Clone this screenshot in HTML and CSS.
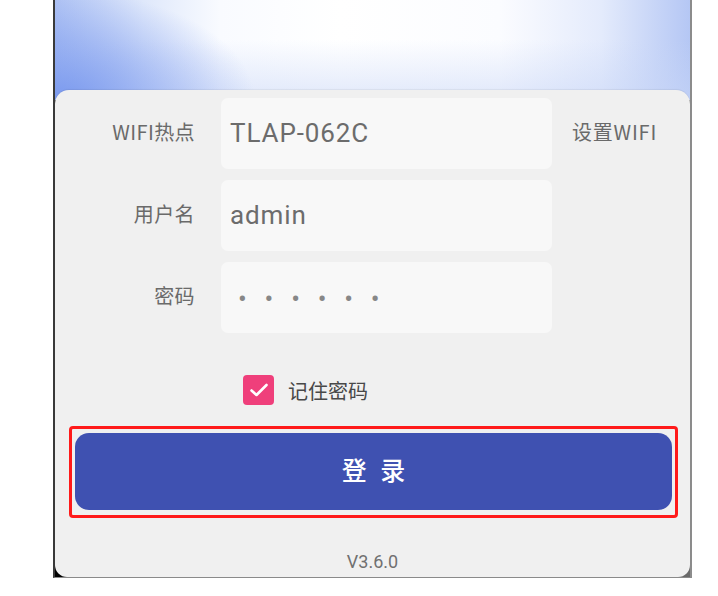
FILE: index.html
```html
<!DOCTYPE html>
<html lang="zh">
<head>
<meta charset="utf-8">
<title>登录</title>
<link rel="stylesheet" href="styles.css">
</head>
<body>
<div class="frame">
  <div class="card">
    <div class="row">
      <div class="label">WIFI热点</div>
      <div class="field"><span class="value">TLAP-062C</span></div>
      <div class="side">设置WIFI</div>
    </div>
    <div class="row">
      <div class="label">用户名</div>
      <div class="field"><span class="value">admin</span></div>
    </div>
    <div class="row">
      <div class="label">密码</div>
      <div class="field"><span class="dots">••••••</span></div>
    </div>
    <div class="remember">
      <span class="check">
        <svg width="20" height="16" viewBox="0 0 20 16"><path d="M2.5 8.5 L7.5 13 L17.5 3" fill="none" stroke="#fff" stroke-width="2.6" stroke-linecap="round" stroke-linejoin="round"/></svg>
      </span>
      <span class="remember-text">记住密码</span>
    </div>
    <div class="highlight">
      <button class="login">登 录</button>
    </div>
    <div class="version">V3.6.0</div>
  </div>
</div>
</body>
</html>
```

FILE: styles.css
```css
* { box-sizing: border-box; }
html, body { margin: 0; padding: 0; background: #ffffff; }
body { font-family: Roboto, "Noto Sans CJK SC", sans-serif; }

.frame {
  margin-left: 53px;
  width: 639px;
  height: 578px;
  border-left: 2px solid #3a3a3a;
  border-right: 2px solid #8c8c8c;
  border-bottom: 1px solid #8a8a8a;
  background-color: #2a2a2a;
  background-repeat: no-repeat;
  background-image:
    radial-gradient(ellipse 200px 110px at 0% 100%, rgba(118,150,238,0.95) 0%, rgba(118,150,238,0) 100%),
    linear-gradient(to bottom, rgba(200,214,247,0) 0%, rgba(200,214,247,0) 40%, rgba(200,214,247,0.55) 100%),
    linear-gradient(to right, #b2c5f4 0%, #dfe8fb 14%, #f9fbff 26%, #ffffff 45%, #fbfcff 70%, #e4ebfc 86%, #b5c7f4 100%),
    linear-gradient(to right, #000000, #6a6a6a);
  background-size: 100% 100px, 100% 100px, 100% 100px, 100% 100%;
  padding-top: 90px;
}

.card {
  height: 487px;
  background: #f0f0f0;
  border-radius: 14px 14px 12px 12px;
  box-shadow: 0 -1px 1px rgba(0,0,0,0.06);
  padding-top: 8px;
  display: flex;
  flex-direction: column;
}

.row {
  display: flex;
  align-items: center;
  height: 71px;
  margin-bottom: 11px;
}

.label {
  width: 140px;
  padding-bottom: 5px;
  text-align: right;
  font-family: "Noto Sans CJK SC", sans-serif;
  font-size: 20px;
  letter-spacing: 0.4px;
  color: #6a6a6a;
}

.field {
  margin-left: 26px;
  width: 331px;
  height: 71px;
  background: #f8f8f8;
  border-radius: 7px;
  display: flex;
  align-items: center;
  padding-left: 9px;
}

.value {
  font-family: Roboto, sans-serif;
  font-size: 26px;
  letter-spacing: 0.9px;
  color: #6c6c6c;
  padding-bottom: 2px;
}

.dots {
  font-family: Roboto, sans-serif;
  font-size: 26px;
  color: #878787;
  letter-spacing: 17.8px;
  padding-left: 8px;
  padding-top: 2px;
}

.side {
  margin-left: 20px;
  padding-bottom: 5px;
  font-family: "Noto Sans CJK SC", sans-serif;
  font-size: 20px;
  letter-spacing: 0.8px;
  color: #6a6a6a;
}

.remember {
  display: flex;
  align-items: center;
  margin-top: 31px;
  padding-left: 188px;
  height: 30px;
}

.check {
  width: 31px;
  height: 30px;
  border-radius: 4px;
  background: #ef3f7b;
  display: flex;
  align-items: center;
  justify-content: center;
}

.remember-text {
  margin-left: 14px;
  font-family: "Noto Sans CJK SC", sans-serif;
  font-size: 20px;
  color: #484848;
}

.highlight {
  margin-top: 21px;
  margin-left: 14px;
  width: 609px;
  border: 3px solid #ff1a1a;
  border-radius: 4px;
  padding: 4px 3px 5px;
}

.login {
  display: block;
  width: 100%;
  height: 77px;
  border: none;
  border-radius: 14px;
  background: #3f51b1;
  color: #ffffff;
  font-family: "Noto Sans CJK SC", sans-serif;
  font-size: 25px;
  font-weight: 500;
  letter-spacing: 4px;
  padding: 0 0 5px 4px;
}

.version {
  margin-top: auto;
  margin-bottom: 5px;
  text-align: center;
  font-family: Roboto, sans-serif;
  font-size: 18px;
  color: #707070;
}
```
